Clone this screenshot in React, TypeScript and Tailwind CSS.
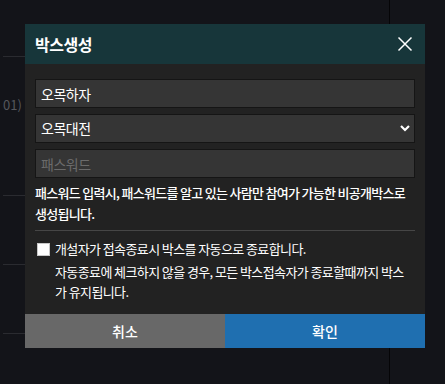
import { useState } from "react";

const font = { fontFamily: '"Noto Sans CJK KR", "Noto Sans", sans-serif' };

const Backdrop = () => (
  <div className="absolute inset-0">
    <div className="absolute left-[389px] top-0 h-full w-px bg-[#050507]" />
    <div className="absolute left-[3px] top-[56px] h-px w-[22px] bg-[#2a2b30]" />
    <div className="absolute left-[3px] top-[195px] h-px w-[22px] bg-[#2a2b30]" />
    <div className="absolute left-[3px] top-[264px] h-px w-[22px] bg-[#2a2b30]" />
    <div className="absolute left-[3px] top-[333px] h-px w-[22px] bg-[#2a2b30]" />
    <span className="absolute left-[3px] top-[95px] text-[13px] text-[#55575c]">01)</span>
  </div>
);

export default function App() {
  const [autoClose, setAutoClose] = useState(false);

  return (
    <div className="relative h-[384px] w-[445px] overflow-hidden bg-[#131419]" style={font}>
      <Backdrop />
      <div className="relative ml-[25px] pt-[24px] w-[400px]">
        <div className="flex h-[40px] items-center justify-between bg-[#17363a] pl-[10px] pr-[12px]">
          <span className="text-[16px] font-bold tracking-[-0.5px] text-white">박스생성</span>
          <svg width="16" height="16" viewBox="0 0 16 16" className="text-white">
            <path d="M1.5 1.5 L14.5 14.5 M14.5 1.5 L1.5 14.5" stroke="currentColor" strokeWidth="1.5" />
          </svg>
        </div>
        <div className="bg-[#222222] px-[10px] pt-[15px] pb-[12px]">
          <div className="flex flex-col gap-[6px]">
            <input
              defaultValue="오목하자"
              className="h-[29px] w-full border border-[#151515] bg-[#353535] px-[5px] text-[14px] tracking-[-0.5px] text-white outline-none"
            />
            <div className="relative">
              <select className="h-[29px] w-full appearance-none border border-[#151515] bg-[#353535] px-[5px] text-[14px] tracking-[-0.5px] text-white outline-none">
                <option>오목대전</option>
              </select>
              <svg width="10" height="7" viewBox="0 0 10 7" className="pointer-events-none absolute right-[5px] top-[11px] text-white">
                <path d="M1 1 L5 5 L9 1" fill="none" stroke="currentColor" strokeWidth="2.2" />
              </svg>
            </div>
            <input
              placeholder="패스워드"
              className="h-[29px] w-full border border-[#151515] bg-[#353535] px-[5px] text-[14px] tracking-[-0.5px] text-white outline-none placeholder:text-[#6b6b6b]"
            />
          </div>
          <p className="mt-[4px] text-[13px] font-medium leading-[21px] tracking-[-0.7px] text-white">
            패스워드 입력시, 패스워드를 알고 있는 사람만 참여가 가능한 비공개박스로 생성됩니다.
          </p>
          <div className="mt-[6px] h-px bg-[#464646]" />
          <label className="mt-[8px] flex items-center gap-[5px] pl-[2px] text-[13px] leading-[20px] tracking-[-0.6px] text-white">
            <input
              type="checkbox"
              checked={autoClose}
              onChange={(e) => setAutoClose(e.target.checked)}
              className="h-[13px] w-[13px] appearance-none border border-[#c8c8c8] bg-white checked:bg-[#1f6fb0]"
            />
            개설자가 접속종료시 박스를 자동으로 종료합니다.
          </label>
          <p className="mt-[3px] pl-[20px] pr-[8px] text-[13px] leading-[20px] tracking-[-0.6px] text-white">
            자동종료에 체크하지 않을 경우, 모든 박스접속자가 종료할때까지 박스가 유지됩니다.
          </p>
        </div>
        <div className="grid h-[34px] grid-cols-2 text-[14px] font-medium text-white">
          <button className="bg-[#686868]">취소</button>
          <button className="bg-[#1f6fb0]">확인</button>
        </div>
      </div>
    </div>
  );
}
